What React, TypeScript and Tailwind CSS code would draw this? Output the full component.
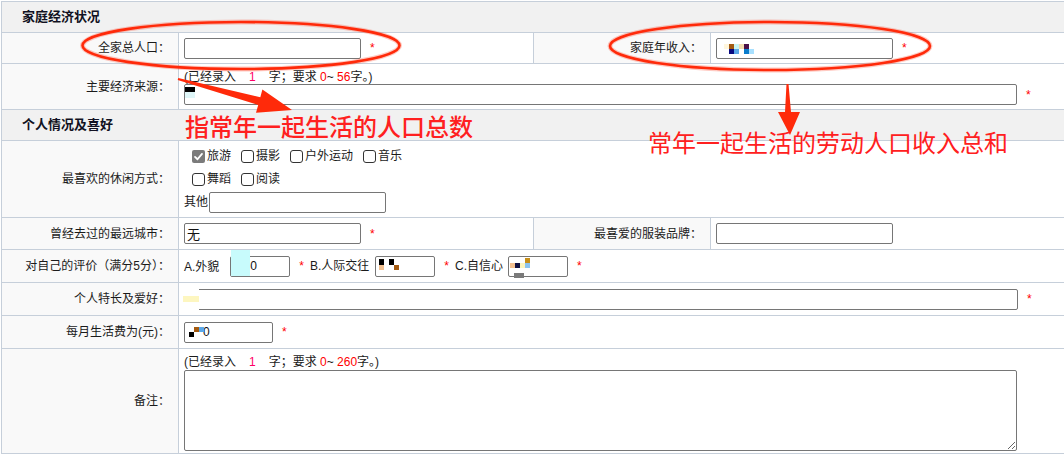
import React from 'react';

const cell = 'border border-[#c6cfda]';
const labelCell = `${cell} bg-[#f9f9f9] text-right pr-[8px] whitespace-nowrap align-middle`;
const valueCell = `${cell} bg-white pl-[5px] align-middle`;
const inputBase =
  'h-[21px] border border-[#767676] rounded-[2px] bg-white px-[2px] text-[12px] text-[#111] outline-none align-middle';

// censored bits left in the screenshot: a tiny grid of coloured squares laid over an input
function Mosaic({ className, cells }: { className: string; cells: string[] }) {
  return (
    <span className={`absolute grid pointer-events-none ${className}`}>
      {cells.map((c, i) => (
        <span key={i} className={c} />
      ))}
    </span>
  );
}

function Star({ className = 'ml-[9px]' }: { className?: string }) {
  return <span className={`text-[#ff0000] text-[12px] align-middle ${className}`}>*</span>;
}

function Check({ checked = false, label }: { checked?: boolean; label: string }) {
  return (
    <span className="inline-flex items-center mr-[5px]">
      {checked ? (
        <span className="ml-[5px] w-[13px] h-[13px] rounded-[2px] bg-[#7b7b7b] flex items-center justify-center">
          <svg width="11" height="11" viewBox="0 0 12 12">
            <path d="M2.2 6.4 L4.9 9 L9.8 3.2" fill="none" stroke="#fff" strokeWidth="2" strokeLinecap="round" strokeLinejoin="round" />
          </svg>
        </span>
      ) : (
        <span className="ml-[5px] w-[13px] h-[13px] rounded-[3px] border border-[#333] bg-white" />
      )}
      <span className="ml-[2px]">{label}</span>
    </span>
  );
}

function Counter({ max }: { max: string }) {
  return (
    <div className="leading-[14px] h-[14px] whitespace-nowrap">
      (已经录入<span className="text-[#ff0066] px-[13px]">1</span>字；要求 <span className="text-[#ff0000]">0</span>~{' '}
      <span className="text-[#ff0000]">{max}</span>字。)
    </div>
  );
}

export default function App() {
  return (
    <div className="relative w-[1064px] h-[455px] overflow-hidden bg-white text-[12px] text-[#1b1b1b] font-['Liberation_Sans','Noto_Sans_CJK_SC',sans-serif]">
      <table className="mt-[1px] ml-[1px] w-[1090px] border-collapse table-fixed">
        <colgroup>
          <col className="w-[177px]" />
          <col className="w-[355px]" />
          <col className="w-[177px]" />
          <col />
        </colgroup>
        <tbody>
          {/* 家庭经济状况 */}
          <tr className="h-[31px]">
            <td colSpan={4} className={`${cell} bg-[#f1f1f1] pl-[20px] font-bold text-[13px] text-[#111122]`}>
              家庭经济状况
            </td>
          </tr>
          <tr className="h-[31px]">
            <td className={labelCell}>全家总人口：</td>
            <td className={valueCell}>
              <input readOnly className={`${inputBase} w-[177px]`} />
              <Star />
            </td>
            <td className={labelCell}>家庭年收入：</td>
            <td className={`${valueCell} pl-[4px]`}>
              <span className="relative inline-block align-middle">
                <input readOnly className={`${inputBase} w-[177px]`} />
                <Mosaic
                  className="left-[8px] top-[6px] grid-cols-6"
                  cells={[
                    'w-[5px] h-[5px] bg-[#fff6dc]', 'w-[5px] h-[5px] bg-[#a35a12]', 'w-[5px] h-[5px] bg-[#c8f4f4]',
                    'w-[5px] h-[5px] bg-[#f2dcb0]', 'w-[5px] h-[5px] bg-[#4a1048]', 'w-[5px] h-[5px]',
                    'w-[5px] h-[5px]', 'w-[5px] h-[5px] bg-[#0a0a80]', 'w-[5px] h-[5px] bg-[#5aa8e8]',
                    'w-[5px] h-[5px]', 'w-[5px] h-[5px] bg-[#0a7ccc]', 'w-[5px] h-[5px] bg-[#a8e0ff]',
                  ]}
                />
              </span>
              <Star />
            </td>
          </tr>
          <tr className="h-[46px]">
            <td className={labelCell}>主要经济来源：</td>
            <td colSpan={3} className={`${cell} bg-white pl-[5px] align-top pt-[6px]`}>
              <Counter max="56" />
              <div className="flex items-center">
                <span className="relative inline-block">
                  <input readOnly className={`${inputBase} w-[833px] block`} />
                  <Mosaic
                    className="left-[1px] top-[3px] grid-cols-1"
                    cells={['w-[10px] h-[5px] bg-[#000]', 'w-[10px] h-[6px] bg-[#dff6f8]']}
                  />
                </span>
                <Star />
              </div>
            </td>
          </tr>

          {/* 个人情况及喜好 */}
          <tr className="h-[31px]">
            <td colSpan={4} className={`${cell} bg-[#f1f1f1] pl-[20px] font-bold text-[13px] text-[#111122]`}>
              个人情况及喜好
            </td>
          </tr>
          <tr className="h-[77px]">
            <td className={labelCell}>最喜欢的休闲方式：</td>
            <td colSpan={3} className={`${valueCell} pl-[8px]`}>
              <div className="flex flex-col">
                <div className="flex items-center h-[23px]">
                  <Check checked label="旅游" />
                  <Check label="摄影" />
                  <Check label="户外运动" />
                  <Check label="音乐" />
                </div>
                <div className="flex items-center h-[23px]">
                  <Check label="舞蹈" />
                  <Check label="阅读" />
                </div>
                <div className="flex items-center h-[23px] -ml-[3px]">
                  <span>其他</span>
                  <input readOnly className={`${inputBase} w-[177px] h-[20px] ml-[1px]`} />
                </div>
              </div>
            </td>
          </tr>
          <tr className="h-[32px]">
            <td className={labelCell}>曾经去过的最远城市：</td>
            <td className={valueCell}>
              <input readOnly value="无" className={`${inputBase} w-[177px] text-[13px]`} />
              <Star />
            </td>
            <td className={labelCell}>最喜爱的服装品牌：</td>
            <td className={`${valueCell} pl-[4px]`}>
              <input readOnly className={`${inputBase} w-[177px]`} />
            </td>
          </tr>
          <tr className="h-[33px]">
            <td className={labelCell}>对自己的评价（满分5分）：</td>
            <td colSpan={3} className={`${valueCell} whitespace-nowrap`}>
              <span className="align-middle">A.外貌</span>
              <span className="relative inline-block align-middle ml-[11px]">
                <input readOnly value="0" className={`${inputBase} w-[60px] pl-[19px] block`} />
                <Mosaic className="left-[1px] -top-[6px] grid-cols-1" cells={['w-[19px] h-[26px] bg-[#c8fbfc]']} />
              </span>
              <Star />
              <span className="align-middle ml-[6px]">B.人际交往</span>
              <span className="relative inline-block align-middle ml-[6px]">
                <input readOnly className={`${inputBase} w-[60px] block`} />
                <Mosaic
                  className="left-[4px] top-[3px] grid-cols-4"
                  cells={[
                    'w-[5px] h-[6px] bg-[#000]', 'w-[5px] h-[6px]', 'w-[5px] h-[6px] bg-[#000]', 'w-[5px] h-[6px]',
                    'w-[5px] h-[5px] bg-[#f2c090]', 'w-[5px] h-[5px]', 'w-[5px] h-[5px]', 'w-[5px] h-[5px] bg-[#a45a10]',
                  ]}
                />
              </span>
              <Star />
              <span className="align-middle ml-[6px]">C.自信心</span>
              <span className="relative inline-block align-middle ml-[5px]">
                <input readOnly className={`${inputBase} w-[60px] block`} />
                <Mosaic
                  className="left-[2px] top-[2px] grid-cols-4"
                  cells={[
                    'w-[5px] h-[5px]', 'w-[5px] h-[5px]', 'w-[5px] h-[5px]', 'w-[5px] h-[5px] bg-[#c8901a]',
                    'w-[5px] h-[5px] bg-[#f2c090]', 'w-[5px] h-[5px] bg-[#101040]', 'w-[5px] h-[5px] bg-[#fdf6c0]', 'w-[5px] h-[5px] bg-[#8cc4f0]',
                  ]}
                />
                <span className="absolute left-[6px] top-[17px] w-[10px] h-[5px] bg-[#7a7a7a]" />
              </span>
              <Star />
            </td>
          </tr>
          <tr className="h-[33px]">
            <td className={labelCell}>个人特长及爱好：</td>
            <td colSpan={3} className={valueCell}>
              <span className="relative inline-block align-middle">
                <input readOnly className={`${inputBase} w-[834px] block`} />
                <Mosaic
                  className="-left-[1px] -top-[3px] grid-cols-1"
                  cells={['w-[16px] h-[10px] bg-white', 'w-[16px] h-[6px] bg-[#fdf6c0]', 'w-[16px] h-[9px] bg-white']}
                />
              </span>
              <Star />
            </td>
          </tr>
          <tr className="h-[33px]">
            <td className={labelCell}>每月生活费为(元)：</td>
            <td colSpan={3} className={valueCell}>
              <span className="relative inline-block align-middle">
                <input readOnly value="0" className={`${inputBase} w-[89px] pl-[18px] block`} />
                <Mosaic
                  className="left-[5px] top-[5px] grid-cols-3"
                  cells={[
                    'w-[5px] h-[5px]', 'w-[5px] h-[5px] bg-[#a45a10]', 'w-[5px] h-[5px] bg-[#5aa8e8]',
                    'w-[5px] h-[5px] bg-[#000]', 'w-[5px] h-[5px]', 'w-[5px] h-[5px]',
                  ]}
                />
              </span>
              <Star />
            </td>
          </tr>
          <tr className="h-[105px]">
            <td className={labelCell}>备注：</td>
            <td colSpan={3} className={`${cell} bg-white pl-[5px] align-top pt-[6px]`}>
              <Counter max="260" />
              <textarea readOnly className="block mt-[1px] w-[833px] h-[81px] border border-[#767676] rounded-[2px] bg-white outline-none resize" />
            </td>
          </tr>
        </tbody>
      </table>

      {/* hand-drawn annotations over the form */}
      <svg className="absolute left-0 top-0 pointer-events-none" width="1064" height="455" viewBox="0 0 1064 455">
        <g fill="none" stroke="#ff2a0a">
          <ellipse cx="241" cy="45.5" rx="158.5" ry="23.5" strokeWidth="5" strokeOpacity="0.25" />
          <ellipse cx="241" cy="45.5" rx="158.5" ry="23.5" strokeWidth="2.6" />
          <ellipse cx="770" cy="46" rx="160" ry="24" strokeWidth="5" strokeOpacity="0.25" />
          <ellipse cx="770" cy="46" rx="160" ry="24" strokeWidth="2.6" />
        </g>
        <polygon
          fill="#ff2a0a"
          points="178.3,78 260.3,97.2 262.4,89.5 292,110 256,112.7 258.2,105 177.7,80"
        />
        <polygon fill="#ff2a0a" points="786.5,84 788.5,84 791,112 800,112 790,135 778,112 785,112" />
      </svg>
      <div className="absolute left-[185px] top-[113px] text-[24px] leading-[26px] font-medium text-[#ff2020] whitespace-nowrap font-['Noto_Sans_CJK_SC',sans-serif]">
        指常年一起生活的人口总数
      </div>
      <div className="absolute left-[648px] top-[129px] text-[24px] leading-[26px] text-[#ff2020] whitespace-nowrap font-['Noto_Sans_CJK_SC',sans-serif]">
        常年一起生活的劳动人口收入总和
      </div>
    </div>
  );
}
